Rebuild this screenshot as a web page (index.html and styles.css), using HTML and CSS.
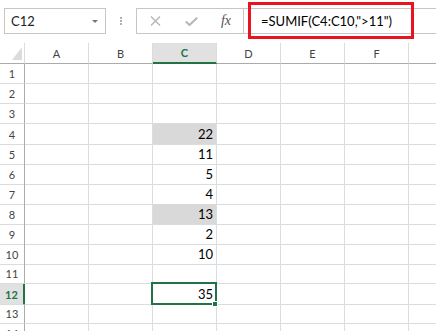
FILE: index.html
```html
<!DOCTYPE html>
<html lang="en">
<head>
    <meta charset="UTF-8">
    <title>SUMIF</title>
    <link rel="stylesheet" href="styles.css">
</head>
<body>
    <!-- Barra de fórmulas -->
    <div class="formula-bar">
        <div class="name-box"><span>C12</span><span class="arrow"></span></div>
        <div class="grip"><i></i><i></i><i></i></div>
        <div class="buttons">
            <span>
                <svg width="11" height="10" viewBox="0 0 11 10"><path d="M1 0.5 L10 9.5 M10 0.5 L1 9.5" stroke="#b5b5b5" stroke-width="1.3" fill="none"/></svg>
            </span>
            <span>
                <svg width="13" height="9" viewBox="0 0 13 9"><path d="M0.8 4.5 L4.5 8 L12.2 0.8" stroke="#b5b5b5" stroke-width="2" fill="none"/></svg>
            </span>
            <span class="fx">fx</span>
        </div>
        <div class="formula">=SUMIF(C4:C10,"&gt;11")</div>
        <div class="highlight"></div>
    </div>

    <!-- Hoja -->
    <div class="sheet">
        <div class="row head">
            <div class="corner"><span class="tri"></span></div>
            <div>A</div><div>B</div><div class="sel">C</div><div>D</div><div>E</div><div>F</div><div></div>
        </div>
        <div class="row"><div class="num">1</div><div></div><div></div><div></div><div></div><div></div><div></div><div></div></div>
        <div class="row"><div class="num">2</div><div></div><div></div><div></div><div></div><div></div><div></div><div></div></div>
        <div class="row"><div class="num">3</div><div></div><div></div><div></div><div></div><div></div><div></div><div></div></div>
        <div class="row"><div class="num">4</div><div></div><div></div><div class="val fill">22</div><div></div><div></div><div></div><div></div></div>
        <div class="row"><div class="num">5</div><div></div><div></div><div class="val">11</div><div></div><div></div><div></div><div></div></div>
        <div class="row"><div class="num">6</div><div></div><div></div><div class="val">5</div><div></div><div></div><div></div><div></div></div>
        <div class="row"><div class="num">7</div><div></div><div></div><div class="val">4</div><div></div><div></div><div></div><div></div></div>
        <div class="row"><div class="num">8</div><div></div><div></div><div class="val fill">13</div><div></div><div></div><div></div><div></div></div>
        <div class="row"><div class="num">9</div><div></div><div></div><div class="val">2</div><div></div><div></div><div></div><div></div></div>
        <div class="row"><div class="num">10</div><div></div><div></div><div class="val">10</div><div></div><div></div><div></div><div></div></div>
        <div class="row"><div class="num">11</div><div></div><div></div><div></div><div></div><div></div><div></div><div></div></div>
        <div class="row"><div class="num sel">12</div><div></div><div></div><div class="val active">35<span class="handle"></span></div><div></div><div></div><div></div><div></div></div>
        <div class="row"><div class="num">13</div><div></div><div></div><div></div><div></div><div></div><div></div><div></div></div>
        <div class="row"><div class="num">14</div><div></div><div></div><div></div><div></div><div></div><div></div><div></div></div>
    </div>
</body>
</html>
```

FILE: styles.css
```css
body {
    margin: 0;
    width: 436px;
    height: 331px;
    overflow: hidden;
    background: #ffffff;
    font-family: Lato, 'Liberation Sans', sans-serif;
    color: #000000;
}

/* Barra de fórmulas */
.formula-bar {
    position: relative;
    display: flex;
    height: 43px;
    padding: 8px 0 9px 4px;
    box-sizing: border-box;
}

.name-box {
    width: 102px;
    border: 1px solid #c6c6c6;
    box-sizing: border-box;
    display: flex;
    align-items: center;
    justify-content: space-between;
    padding: 0 7px 0 6px;
    font-size: 13px;
    color: #222222;
}

.arrow {
    border-left: 3px solid transparent;
    border-right: 3px solid transparent;
    border-top: 3px solid #777777;
}

.grip {
    width: 30px;
    display: flex;
    flex-direction: column;
    align-items: center;
    justify-content: center;
    gap: 1px;
}

.grip i {
    width: 2px;
    height: 2px;
    background: #b0b0b0;
}

.buttons {
    display: flex;
    width: 107px;
    border: 1px solid #c6c6c6;
    border-right: none;
    box-sizing: border-box;
}

.buttons span {
    width: 36px;
    display: flex;
    align-items: center;
    justify-content: center;
}

.buttons .fx {
    width: 34px;
    font-family: 'Liberation Serif', serif;
    font-style: italic;
    font-size: 14px;
    color: #555555;
}

.formula {
    flex: 1;
    display: flex;
    align-items: center;
    padding-left: 17px;
    border: 1px solid #c6c6c6;
    border-right: none;
    font-size: 13px;
}

.highlight {
    position: absolute;
    left: 248px;
    top: 2px;
    width: 166px;
    height: 37px;
    border: 3px solid #e8141f;
    box-sizing: border-box;
}

/* Hoja */
.row {
    display: grid;
    grid-template-columns: 25px repeat(7, 64px);
    height: 20px;
}

.row > div {
    border-right: 1px solid #dadcdd;
    border-bottom: 1px solid #dadcdd;
    box-sizing: border-box;
}

.head {
    height: 21px;
    font-size: 11px;
    color: #444444;
}

.head > div {
    display: flex;
    align-items: center;
    justify-content: center;
    border-bottom-color: #ababab;
}

.head .sel {
    background: #e1e1e1;
    color: #217346;
    font-weight: bold;
    border-bottom: 2px solid #217346;
}

.corner {
    align-items: flex-end !important;
    justify-content: flex-end !important;
}

.tri {
    width: 10px;
    height: 13px;
    margin: 0 2px 3px 0;
    background: #dcdcdc;
    clip-path: polygon(100% 0, 100% 100%, 0 100%);
}

.row > .num {
    display: flex;
    align-items: center;
    justify-content: center;
    font-size: 11px;
    color: #444444;
    border-right-color: #ababab;
}

.row > .num.sel {
    background: #e1e1e1;
    color: #217346;
    font-weight: bold;
    border-right: 2px solid #217346;
}

.val {
    text-align: right;
    padding: 1px 3px 0 0;
    font-size: 13px;
    line-height: 19px;
}

.fill {
    background: #d9d9d9;
}

.active {
    position: relative;
    z-index: 1;
}

.active::before {
    content: '';
    position: absolute;
    left: -2px;
    top: -2px;
    right: -1px;
    bottom: -1px;
    border: 2px solid #217346;
}

.handle {
    position: absolute;
    right: -2px;
    bottom: -3px;
    width: 6px;
    height: 6px;
    background: #217346;
    border: 1px solid #ffffff;
    box-sizing: border-box;
}
```
